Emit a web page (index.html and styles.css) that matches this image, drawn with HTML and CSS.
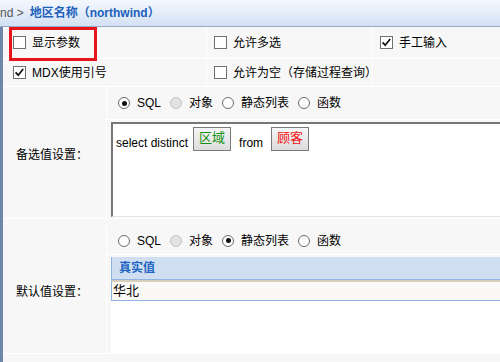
FILE: index.html
```html
<!DOCTYPE html>
<html lang="zh">
<head>
<meta charset="utf-8">
<title>地区名称</title>
<link rel="stylesheet" href="styles.css">
</head>
<body>
<div class="titlebar"><span class="crumb">nd &gt;</span><span class="title">地区名称（northwind）</span></div>
<div class="main">
  <div class="opts">
    <div class="opt c1"><span class="cb"></span><span class="lbl">显示参数</span><span class="redbox"></span></div>
    <div class="opt c2"><span class="cb"></span><span class="lbl">允许多选</span></div>
    <div class="opt c3"><span class="cb on"><svg viewBox="0 0 13 13" width="13" height="13"><path d="M2.6 6.4 L5.2 9.2 L10.2 3" fill="none" stroke="#111" stroke-width="1.7"/></svg></span><span class="lbl">手工输入</span></div>
    <div class="opt c1 r2"><span class="cb on"><svg viewBox="0 0 13 13" width="13" height="13"><path d="M2.6 6.4 L5.2 9.2 L10.2 3" fill="none" stroke="#111" stroke-width="1.7"/></svg></span><span class="lbl">MDX使用引号</span></div>
    <div class="opt c2 r2"><span class="cb"></span><span class="lbl">允许为空（存储过程查询）</span></div>
    <div class="opt c3 r2"></div>
  </div>

  <div class="section s1">
    <div class="label">备选值设置：</div>
    <div class="content">
      <div class="radios">
        <span class="rd on"></span><span class="rl">SQL</span>
        <span class="rd dis"></span><span class="rl">对象</span>
        <span class="rd"></span><span class="rl">静态列表</span>
        <span class="rd"></span><span class="rl">函数</span>
      </div>
      <div class="editwrap">
        <div class="editor">
          <span class="txt">select distinct</span>
          <span class="tok green">区域</span>
          <span class="txt from">from</span>
          <span class="tok red">顾客</span>
        </div>
      </div>
    </div>
  </div>

  <div class="section s2">
    <div class="label">默认值设置：</div>
    <div class="content">
      <div class="radios">
        <span class="rd"></span><span class="rl">SQL</span>
        <span class="rd dis"></span><span class="rl">对象</span>
        <span class="rd on"></span><span class="rl">静态列表</span>
        <span class="rd"></span><span class="rl">函数</span>
      </div>
      <div class="gridwrap">
        <div class="grid">
          <div class="ghead">真实值</div>
          <div class="grow">华北</div>
          <div class="gbody"></div>
        </div>
      </div>
    </div>
  </div>
</div>
</body>
</html>
```
FILE: styles.css
```css
* { box-sizing: border-box; }
html, body { margin: 0; padding: 0; }
body {
  width: 500px;
  height: 362px;
  overflow: hidden;
  background: #f6f6f6;
  font-family: "Liberation Sans", "Noto Sans CJK SC", sans-serif;
  font-size: 12px;
  line-height: 14px;
  color: #000;
}
.titlebar {
  height: 27px;
  border-bottom: 1px solid #94a9c8;
  background: linear-gradient(#f4f8fd, #d3e1f4);
  display: flex;
  align-items: center;
  white-space: nowrap;
}
.crumb { color: #555; margin-right: 6px; }
.title { color: #1d5fba; font-weight: bold; }

.main {
  border-left: 3px solid #6d87a8;
  height: 335px;
  background: #f7f7f7;
}
.opts {
  display: grid;
  grid-template-columns: 204px 166px 1fr;
}
.opt {
  display: flex;
  align-items: center;
  height: 32px;
  border-bottom: 1px solid #fff;
  border-right: 1px solid #fff;
  position: relative;
  white-space: nowrap;
}
.opt.r2 { height: 28px; }
.opt.c1 { padding-left: 10px; }
.opt.c2 { padding-left: 7px; }
.opt.c3 { padding-left: 7px; border-right: none; }
.cb {
  width: 13px;
  height: 13px;
  border: 1px solid #707070;
  background: #fff;
  flex: none;
  display: block;
  position: relative;
}
.cb svg { position: absolute; left: -1px; top: -1px; }
.lbl { margin-left: 6px; }
.redbox {
  position: absolute;
  left: 6px;
  top: 0;
  width: 88px;
  height: 34px;
  border: 3px solid #e8141c;
}

.section {
  display: grid;
  grid-template-columns: 104px 1fr;
  border-bottom: 1px solid #fff;
}
.s2 { margin-top: 7px; }
.label {
  border-right: 1px solid #fff;
  display: flex;
  align-items: center;
  padding-left: 13px;
  padding-top: 4px;
  white-space: nowrap;
}
.content { min-width: 0; }
.radios {
  height: 33px;
  border-bottom: 1px solid #fff;
  display: flex;
  align-items: center;
  padding-left: 11px;
  white-space: nowrap;
}
.s2 .radios { height: 29px; padding-top: 1px; }
.rd {
  width: 12px;
  height: 12px;
  border-radius: 50%;
  border: 1px solid #6a6a6a;
  background: #fff;
  flex: none;
  position: relative;
}
.rd.on::after {
  content: "";
  position: absolute;
  left: 2.5px;
  top: 2.5px;
  width: 5px;
  height: 5px;
  border-radius: 50%;
  background: #111;
}
.rd.dis { background: #e2e2e2; border-color: #c4c4c4; }
.rl { margin-left: 7px; margin-right: 9px; }

.editwrap { padding: 2px 0 1px 4px; }
.editor {
  height: 95px;
  margin-right: -20px;
  background: #fff;
  border-top: 2px solid #767676;
  border-left: 2px solid #767676;
  border-bottom: 1px solid #e6e6e6;
  padding: 3px 0 0 3px;
  display: flex;
  align-items: flex-start;
  white-space: nowrap;
}
.txt { margin-top: 9px; }
.txt.from { margin-left: 8px; }
.tok {
  height: 24px;
  border: 1px solid #7a7a7a;
  background: linear-gradient(#f6f6f6, #dcdcdc);
  padding: 2px 5px 4px;
  font-size: 13px;
  line-height: 16px;
  margin-left: 5px;
}
.tok.red { margin-left: 8px; color: #f01010; }
.tok.green { color: #129012; }

.gridwrap { padding: 2px 0 0 4px; }
.grid { margin-right: -20px; }
.ghead {
  height: 23px;
  background: #cfdff1;
  border-left: 1px solid #8fb4e4;
  border-bottom: 1px solid #8fb4e4;
  color: #2063c2;
  font-weight: bold;
  padding-left: 7px;
  line-height: 22px;
}
.grow {
  height: 21px;
  background: #fbf9f5;
  border-top: 2px solid #d6cdbb;
  border-left: 1px solid #8fb4e4;
  border-bottom: 1px solid #8fb4e4;
  padding-left: 1px;
  line-height: 18px;
  font-size: 13px;
}
.gbody { height: 52px; background: #fff; }
```
